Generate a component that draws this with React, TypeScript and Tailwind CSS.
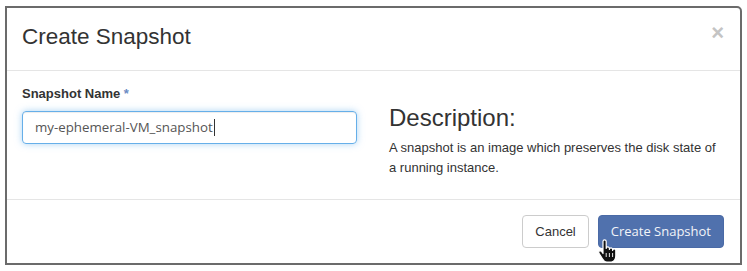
// Модальное окно создания снапшота.

function HandCursor() {
  return (
    <svg
      className="pointer-events-none absolute left-[597px] top-[239px]"
      width="20"
      height="25"
      viewBox="0 0 20 25"
    >
      <path
        d="M6 2.5a1.6 1.6 0 0 1 3.2 0v7a1.6 1.6 0 0 1 3.2 0v1a1.6 1.6 0 0 1 3.2 0v1a1.6 1.6 0 0 1 3.2 0v5.5c0 3.5-2.2 6-4.6 6h-4.4c-2.2 0-3.3-1.2-4.4-3.2l-3.4-5.6a1.5 1.5 0 0 1 2.5-1.7L6 14.5Z"
        fill="#111"
        stroke="#fff"
        strokeWidth="1.2"
        strokeLinejoin="round"
      />
      <path d="M9.2 14v4M12.4 14v4M15.6 14v4" stroke="#fff" strokeWidth="0.9" />
    </svg>
  );
}

export default function App() {
  return (
    <div className="relative h-[271px] w-[747px] bg-white pl-[5px] pt-[6px] font-['Liberation_Sans',Arial,sans-serif]">
      <div className="flex h-[259px] w-[737px] flex-col rounded-tr-[5px] border-2 border-[#6b6b6b] bg-white">
        <div className="flex h-[63px] items-center justify-between border-b border-[#e5e5e5] pl-[15px] pr-[16px]">
          <h4 className="-mt-[3px] text-[22.5px] leading-none text-[#333]">Create Snapshot</h4>
          <span className="-mt-[12px] text-[22px] font-bold leading-none text-[#c4c4c4]">×</span>
        </div>

        <div className="flex h-[129px] gap-[32px] border-b border-[#e5e5e5] px-[15px] pt-[16px]">
          <div className="w-[335px]">
            <div className="text-[13px] font-bold leading-[14px] text-[#333]">
              Snapshot Name <span className="text-[#6a8cc4]">*</span>
            </div>
            <div className="mt-[10px] flex h-[33px] items-center rounded-[4px] border border-[#66afe9] px-[12px] font-['Open_Sans',sans-serif] text-[13.3px] text-[#555] shadow-[inset_0_1px_1px_rgba(0,0,0,0.075),0_0_7px_rgba(102,175,233,0.55)]">
              my-ephemeral-VM_snapshot
              <span className="ml-px h-[17px] w-px bg-[#333]" />
            </div>
          </div>
          <div className="w-[332px] pt-[19px]">
            <div className="text-[24px] font-light leading-none text-[#333]">Description:</div>
            <p className="mt-[8px] text-[13px] leading-[20px] text-[#333]">
              A snapshot is an image which preserves the disk state of a running instance.
            </p>
          </div>
        </div>

        <div className="flex flex-1 items-start justify-end gap-[9px] pr-[16px] pt-[15px]">
          <button className="h-[33px] rounded-[4px] border border-[#ccc] bg-white px-[12px] text-[13px] text-[#333]">
            Cancel
          </button>
          <button className="h-[33px] rounded-[4px] border border-[#4a6aa6] bg-[#5071ad] px-[12px] font-['Open_Sans',sans-serif] text-[13px] text-[#f2f4f8]">
            Create Snapshot
          </button>
        </div>
      </div>
      <HandCursor />
    </div>
  );
}
